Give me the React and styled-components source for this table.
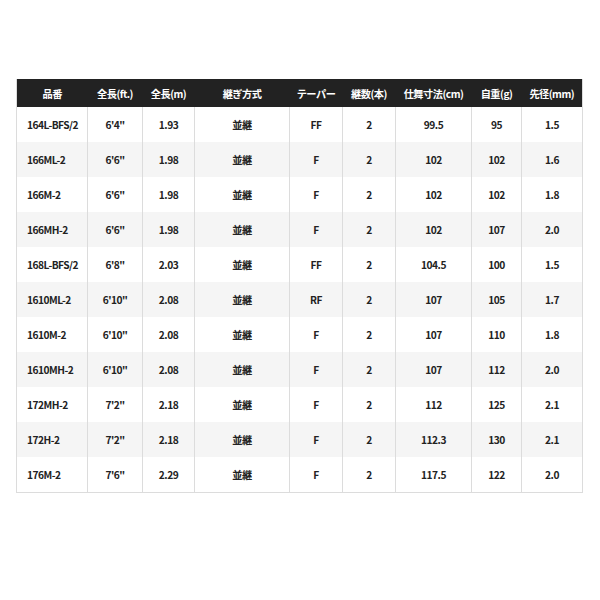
import React from 'react';
import styled, { createGlobalStyle } from 'styled-components';

const GlobalStyle = createGlobalStyle`
  body {
    margin: 0;
    background: #fff;
    font-family: "Noto Sans CJK JP", "Noto Sans", sans-serif;
  }
`;

const Page = styled.div`
  padding: 79px 0 0 16px;
`;

const Table = styled.table`
  border-collapse: collapse;
  table-layout: fixed;
  width: 566px;
  border: 1px solid #dcdcdc;
  border-top: none;
  color: #222;
  font-size: 10.2px;
  font-weight: 700;
  letter-spacing: -0.5px;
`;

const HeadCell = styled.th`
  background: #222;
  color: #fff;
  height: 28px;
  padding: 0;
  font-weight: 700;
  text-align: center;
  white-space: nowrap;
`;

const Row = styled.tr`
  background: ${(p) => (p.$alt ? '#f5f5f5' : '#fff')};
`;

const Cell = styled.td`
  height: 35px;
  padding: 0 0 0 ${(p) => (p.$left ? '10px' : '0')};
  text-align: ${(p) => (p.$left ? 'left' : 'center')};
  border-left: 1px solid #dcdcdc;
  white-space: nowrap;
`;

const columns = [
  { label: '品番', width: 71 },
  { label: '全長(ft.)', width: 55 },
  { label: '全長(m)', width: 52 },
  { label: '継ぎ方式', width: 95 },
  { label: 'テーパー', width: 53 },
  { label: '継数(本)', width: 53 },
  { label: '仕舞寸法(cm)', width: 76 },
  { label: '自重(g)', width: 50 },
  { label: '先径(mm)', width: 61 },
];

const rows = [
  ['164L-BFS/2', '6\'4"', '1.93', '並継', 'FF', '2', '99.5', '95', '1.5'],
  ['166ML-2', '6\'6"', '1.98', '並継', 'F', '2', '102', '102', '1.6'],
  ['166M-2', '6\'6"', '1.98', '並継', 'F', '2', '102', '102', '1.8'],
  ['166MH-2', '6\'6"', '1.98', '並継', 'F', '2', '102', '107', '2.0'],
  ['168L-BFS/2', '6\'8"', '2.03', '並継', 'FF', '2', '104.5', '100', '1.5'],
  ['1610ML-2', '6\'10"', '2.08', '並継', 'RF', '2', '107', '105', '1.7'],
  ['1610M-2', '6\'10"', '2.08', '並継', 'F', '2', '107', '110', '1.8'],
  ['1610MH-2', '6\'10"', '2.08', '並継', 'F', '2', '107', '112', '2.0'],
  ['172MH-2', '7\'2"', '2.18', '並継', 'F', '2', '112', '125', '2.1'],
  ['172H-2', '7\'2"', '2.18', '並継', 'F', '2', '112.3', '130', '2.1'],
  ['176M-2', '7\'6"', '2.29', '並継', 'F', '2', '117.5', '122', '2.0'],
];

export default function App() {
  return (
    <Page>
      <GlobalStyle />
      <Table>
        <colgroup>
          {columns.map((c) => (
            <col key={c.label} style={{ width: c.width }} />
          ))}
        </colgroup>
        <thead>
          <tr>
            {columns.map((c) => (
              <HeadCell key={c.label}>{c.label}</HeadCell>
            ))}
          </tr>
        </thead>
        <tbody>
          {rows.map((r, i) => (
            <Row key={r[0]} $alt={i % 2 === 1}>
              {r.map((v, j) => (
                <Cell key={j} $left={j === 0}>{v}</Cell>
              ))}
            </Row>
          ))}
        </tbody>
      </Table>
    </Page>
  );
}
